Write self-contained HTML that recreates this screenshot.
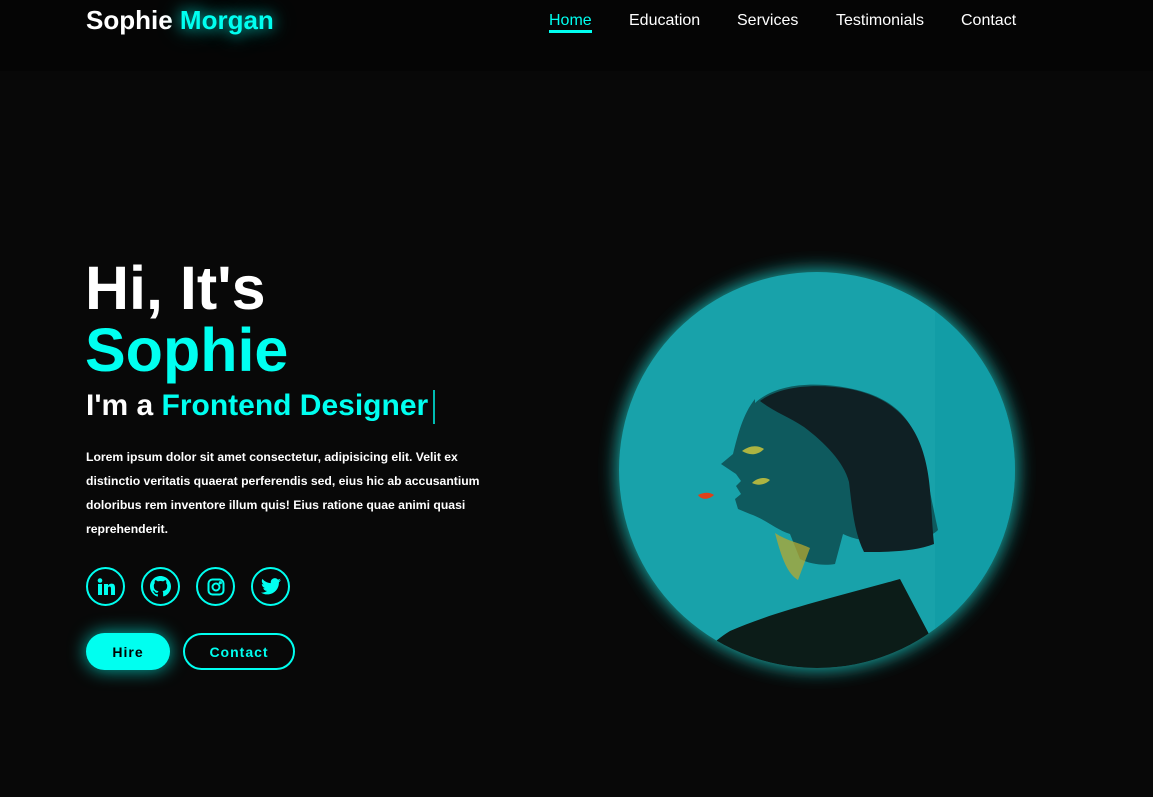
<!DOCTYPE html>
<html><head><meta charset="utf-8"><style>
*{margin:0;padding:0;box-sizing:border-box}
body{width:1153px;height:797px;background:#080808;font-family:"Liberation Sans",Arial,sans-serif;color:#fff;position:relative;overflow:hidden}
header{position:absolute;left:0;top:0;width:1153px;height:71px;background:#050505}
.logo{position:absolute;left:86px;top:5px;font-size:26px;font-weight:bold}
.logo span{color:#00fff0;text-shadow:0 0 14px rgba(0,255,240,.7),0 0 26px rgba(0,255,240,.4)}
nav a{position:absolute;top:12px;font-size:16px;color:#fff;text-decoration:none}
nav a.on{color:#00fff0;border-bottom:3px solid #00fff0;line-height:18px}
.h1{position:absolute;left:85px;font-size:61px;font-weight:bold;line-height:62px}
.h3{position:absolute;left:86px;top:389px;font-size:30px;font-weight:bold}
.h3 span{color:#00fff0}
.cur{display:inline-block;width:2px;height:34px;background:#00bbb2;vertical-align:middle;margin-left:5px}
p{position:absolute;left:86px;top:445px;width:405px;font-size:12.2px;font-weight:bold;line-height:24px}
.ic{position:absolute;top:567px;width:39px;height:39px;border:2px solid #00fff0;border-radius:50%;display:flex;align-items:center;justify-content:center}
.btn{position:absolute;top:633px;height:37px;border-radius:19px;font-size:14px;font-weight:bold;letter-spacing:1px;display:flex;align-items:center;justify-content:center}
</style></head><body>
<header>
<div class="logo">Sophie <span>Morgan</span></div>
<nav><a class="on" style="left:549px">Home</a><a style="left:629px">Education</a><a style="left:737px">Services</a><a style="left:836px">Testimonials</a><a style="left:961px">Contact</a></nav>
</header>
<div class="h1" style="top:257px">Hi, It's</div>
<div class="h1" style="top:319px;color:#00fff0">Sophie</div>
<div class="h3">I'm a <span>Frontend Designer</span><i class="cur"></i></div>
<p>Lorem ipsum dolor sit amet consectetur, adipisicing elit. Velit ex distinctio veritatis quaerat perferendis sed, eius hic ab accusantium doloribus rem inventore illum quis! Eius ratione quae animi quasi reprehenderit.</p>
<div class="ic" style="left:86px"><svg width="20" height="20" viewBox="0 0 20 20" fill="#00fff0"><rect x="2" y="7" width="4" height="11"/><circle cx="4" cy="3.5" r="2.3"/><path d="M8 7h4v1.6c.8-1.3 2.2-2 3.6-2 2.6 0 3.4 1.7 3.4 4.3V18h-4v-6.3c0-1.3-.4-2.2-1.600-2.2S12 10.4 12 11.7V18H8z"/></svg></div>
<div class="ic" style="left:141px"><svg width="21" height="21" viewBox="0 0 16 16" fill="#00fff0"><path d="M8 0C3.6 0 0 3.6 0 8c0 3.5 2.3 6.5 5.5 7.6.4.1.5-.2.5-.4v-1.4c-2.2.5-2.7-1-2.7-1-.4-.9-.9-1.2-.9-1.2-.7-.5.1-.5.1-.5.8.1 1.2.8 1.2.8.7 1.2 1.9.9 2.3.7.1-.5.3-.9.5-1.1-1.8-.2-3.6-.9-3.600-4 0-.9.3-1.6.8-2.1-.1-.2-.4-1 .1-2.1 0 0 .7-.2 2.2.8.6-.2 1.3-.3 2-.3s1.4.1 2 .3c1.500-1 2.2-.8 2.2-.8.4 1.1.2 1.9.1 2.1.5.6.8 1.3.8 2.1 0 3.1-1.9 3.7-3.6 3.9.3.3.5.8.5 1.5v2.2c0 .2.1.5.6.4C13.7 14.5 16 11.5 16 8c0-4.4-3.6-8-8-8z"/></svg></div>
<div class="ic" style="left:196px"><svg width="18" height="18" viewBox="0 0 18 18" fill="none" stroke="#00fff0" stroke-width="2"><rect x="1.5" y="1.5" width="15" height="15" rx="4"/><circle cx="9" cy="9" r="3.5"/><circle cx="13.3" cy="4.7" r=".6" fill="#00fff0"/></svg></div>
<div class="ic" style="left:251px"><svg width="20" height="17" viewBox="0 0 24 20" fill="#00fff0"><path d="M24 2.4c-.9.4-1.8.6-2.8.8 1-.6 1.8-1.6 2.2-2.7-1 .6-2 1-3.1 1.2C19.3.7 18 0 16.6 0c-2.7 0-4.9 2.2-4.9 4.9 0 .4 0 .8.1 1.1C7.7 5.8 4.1 3.9 1.7.9c-.4.7-.7 1.6-.7 2.5 0 1.7.9 3.2 2.2 4.1-.8 0-1.600-.2-2.2-.6v.1c0 2.4 1.7 4.4 3.9 4.8-.4.1-.8.2-1.3.2-.3 0-.6 0-.9-.1.6 2 2.4 3.4 4.600 3.4-1.7 1.3-3.8 2.1-6.1 2.1-.4 0-.8 0-1.2-.1 2.2 1.4 4.8 2.2 7.5 2.2 9.1 0 14-7.5 14-14v-.6c1-.7 1.8-1.6 2.5-2.5z"/></svg></div>
<div class="btn" style="left:86px;width:84px;background:#00fff0;color:#000;box-shadow:0 0 18px rgba(0,255,240,.7)">Hire</div>
<div class="btn" style="left:183px;width:112px;border:2px solid #00fff0;color:#00fff0">Contact</div>
<svg style="position:absolute;left:580px;top:233px" width="475" height="475" viewBox="0 0 475 475">
<defs>
<filter id="g" x="-20%" y="-20%" width="140%" height="140%"><feGaussianBlur stdDeviation="9"/></filter>
<clipPath id="c"><circle cx="237" cy="237" r="198"/></clipPath>
</defs>
<circle cx="237" cy="237" r="200" fill="#1fd6d0" filter="url(#g)" opacity=".8"/>
<g clip-path="url(#c)">
<rect width="475" height="475" fill="#18a2aa"/>
<rect x="355" y="40" width="80" height="400" fill="#0f9aa3" opacity=".6"/>
<path d="M175 170c15-14 40-20 70-18 40 3 70 15 85 40 15 30 20 70 28 105-10 10-30 12-55 12-15 0-30-3-40-8l-8 30c-12 2-25 0-35-5l-10-25c-15-5-25-15-40-20l-12-5-3-10 6-5-5-8 5-5-5-7-15-10 12-10c5-20 10-40 22-55z" fill="#0e5a5e"/>
<path d="M180 168c20-15 55-18 90-12 40 8 62 30 72 60 10 30 8 55 12 95-20 8-50 8-70 8-10-20-12-45-15-70-5-20-25-40-45-55-15-10-30-15-44-26z" fill="#0f2024"/>
<path d="M162 218c8-6 16-6 22-2-6 6-14 7-22 2z M172 250c6-6 14-6 18-3-5 5-12 6-18 3z" fill="#d6cb3a" opacity=".8"/>
<path d="M118 262c6-3 12-3 16 0-4 4-12 6-16 0z" fill="#e04018"/>
<path d="M195 300c12 8 25 10 35 15l-12 32c-10-6-16-20-23-47z" fill="#b5a830" opacity=".75"/>
<path d="M90 480c15-45 40-70 60-82 45-20 110-35 170-52l50 95 20 40z" fill="#0c1c18"/>
</g>
</svg>
</body></html>
